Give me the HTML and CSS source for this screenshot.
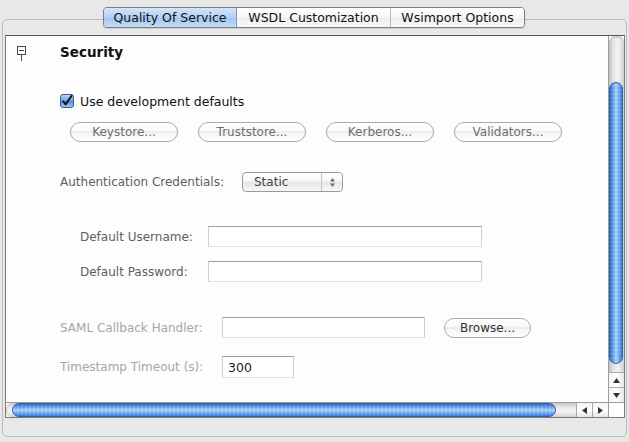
FILE: index.html
```html
<!DOCTYPE html>
<html>
<head>
<meta charset="utf-8">
<link rel="stylesheet" href="styles.css">
</head>
<body>
<div class="tabbar">
  <div class="tab selected">Quality Of Service</div>
  <div class="tab">WSDL Customization</div>
  <div class="tab last">Wsimport Options</div>
</div>
<div class="panel">
  <div class="scrollpane">
    <div class="viewport">
      <div class="row header">
        <div class="tree-toggle"><span class="tree-box"></span><span class="tree-line"></span></div>
        <div class="title">Security</div>
      </div>
      <div class="row checkrow">
        <svg class="checkbox" width="14" height="14" viewBox="0 0 14 14">
          <defs>
            <linearGradient id="cb" x1="0" y1="0" x2="0" y2="1">
              <stop offset="0" stop-color="#bcd8f6"/>
              <stop offset="0.5" stop-color="#6ea7ea"/>
              <stop offset="0.55" stop-color="#4b8de0"/>
              <stop offset="1" stop-color="#a9d0fa"/>
            </linearGradient>
          </defs>
          <rect x="0.5" y="0.5" width="13" height="13" rx="2.5" fill="url(#cb)" stroke="#3d5f8f"/>
          <path d="M3.2 7.2 L5.6 10.4 L11.6 1.8" fill="none" stroke="#111" stroke-width="1.9" stroke-linecap="round" stroke-linejoin="round"/>
        </svg>
        <span class="checklabel">Use development defaults</span>
      </div>
      <div class="row buttons">
        <div class="pill">Keystore...</div>
        <div class="pill">Truststore...</div>
        <div class="pill">Kerberos...</div>
        <div class="pill">Validators...</div>
      </div>
      <div class="row authrow">
        <span class="label w-auth">Authentication Credentials:</span>
        <div class="combo">
          <span class="combo-text">Static</span>
          <span class="combo-arrows">
            <svg width="7" height="11" viewBox="0 0 7 11"><path d="M3.5 1 L6 4.5 L1 4.5 Z" fill="#6a6a6a"/><path d="M3.5 10 L6 6.5 L1 6.5 Z" fill="#6a6a6a"/></svg>
          </span>
        </div>
      </div>
      <div class="row fieldrow indent first-field">
        <span class="label w-user">Default Username:</span>
        <div class="field wide"></div>
      </div>
      <div class="row fieldrow indent second-field">
        <span class="label w-user">Default Password:</span>
        <div class="field wide"></div>
      </div>
      <div class="row fieldrow saml">
        <span class="label disabled w-saml">SAML Callback Handler:</span>
        <div class="field medium"></div>
        <div class="pill browse">Browse...</div>
      </div>
      <div class="row fieldrow timestamp">
        <span class="label disabled w-saml">Timestamp Timeout (s):</span>
        <div class="field small"><span class="field-text">300</span></div>
      </div>
    </div>
    <div class="vscroll">
      <div class="vtrack">
        <div class="vthumb"></div>
      </div>
      <div class="varrow up"><svg width="7" height="5" viewBox="0 0 7 5"><path d="M3.5 0 L7 5 L0 5 Z" fill="#333"/></svg></div>
      <div class="varrow down"><svg width="7" height="5" viewBox="0 0 7 5"><path d="M3.5 5 L7 0 L0 0 Z" fill="#333"/></svg></div>
    </div>
    <div class="hscroll">
      <div class="htrack">
        <div class="hthumb"></div>
      </div>
      <div class="harrow left"><svg width="5" height="7" viewBox="0 0 5 7"><path d="M0 3.5 L5 0 L5 7 Z" fill="#333"/></svg></div>
      <div class="harrow right"><svg width="5" height="7" viewBox="0 0 5 7"><path d="M5 3.5 L0 0 L0 7 Z" fill="#333"/></svg></div>
    </div>
    <div class="corner"></div>
  </div>
</div>
</body>
</html>
```
FILE: styles.css
```css
* { box-sizing: border-box; }
html, body { margin: 0; padding: 0; }
body {
  width: 629px;
  height: 442px;
  overflow: hidden;
  background: #e8e8e8;
  font-family: "DejaVu Sans", "Lucida Grande", sans-serif;
  font-size: 12px;
  color: #111;
}

/* Tabs */
.tabbar {
  position: relative;
  z-index: 1;
  display: flex;
  margin: 7px 0 0 103px;
  height: 21px;
  width: 422px;
  border: 1px solid #7d7d7d;
  border-radius: 4px;
  overflow: hidden;
  box-shadow: 0 1px 1px rgba(0,0,0,0.12);
}
.tab {
  height: 100%;
  display: flex;
  align-items: center;
  justify-content: center;
  font-size: 12.5px;
  color: #111;
  background: linear-gradient(#ffffff, #f6f6f6 50%, #ececec 51%, #fafafa);
  border-right: 1px solid #b9b9b9;
}
.tab:nth-child(1) { width: 133px; }
.tab:nth-child(2) { width: 154px; }
.tab.last { flex: 1; border-right: none; }
.tab.selected {
  background: linear-gradient(#d3e5fa, #b1d0f4 50%, #9fc4f0 51%, #c4def9);
  border-right: 1px solid #7d98bd;
}

/* Panel */
.panel {
  margin: -9px 2px 0 2px;
  height: 418px;
  border: 1px solid #bcbcbc;
  border-radius: 5px;
  padding: 15px 1px 18px 2px;
  background: #e8e8e8;
}
.scrollpane {
  height: 100%;
  border: 1px solid #7a7a7a;
  border-top-color: #555;
  display: grid;
  grid-template-columns: 1fr 16px;
  grid-template-rows: 1fr 15px;
  background: #fdfdfd;
}

/* Viewport content */
.viewport {
  background: #fdfdfd;
  padding: 8px 0 0 54px;
  display: flex;
  flex-direction: column;
  overflow: hidden;
}
.row { display: flex; align-items: center; }
.header { height: 16px; margin-left: -43px; align-items: flex-start; }
.tree-toggle {
  width: 9px;
  display: flex;
  flex-direction: column;
  align-items: center;
  margin-top: 2px;
}
.tree-box {
  width: 9px;
  height: 9px;
  border: 1px solid #4a4a4a;
  background: linear-gradient(#4a4a4a, #4a4a4a) center / 5px 1px no-repeat, #fff;
}
.tree-line { width: 1px; height: 6px; background: #4a4a4a; }
.title {
  margin-left: 34px;
  font-weight: bold;
  font-size: 13.5px;
  line-height: 16px;
  color: #111;
}

.checkrow { height: 14px; margin-top: 34px; }
.checkbox { display: block; flex: none; }
.checklabel { margin-left: 6px; font-size: 12.5px; color: #111; }

.buttons { height: 20px; margin-top: 14px; margin-left: 10px; gap: 20px; }
.pill {
  width: 108px;
  height: 20px;
  border: 1px solid #a9a9a9;
  border-radius: 10px;
  display: flex;
  align-items: center;
  justify-content: center;
  color: #6e6e6e;
  font-size: 12px;
  background: linear-gradient(#ffffff, #f8f8f8 45%, #e4e4e4 50%, #f4f4f4 55%, #ffffff);
}

.authrow { height: 20px; margin-top: 30px; }
.label { color: #5e5e5e; font-size: 12px; white-space: nowrap; }
.label.disabled { color: #a6a6a6; }
.w-auth { width: 182px; }
.w-user { width: 128px; }
.w-saml { width: 162px; }

.combo {
  width: 101px;
  height: 20px;
  border: 1px solid #9a9a9a;
  border-radius: 4px;
  display: flex;
  align-items: center;
  background: linear-gradient(#ffffff, #f7f7f7 45%, #e6e6e6 52%, #f8f8f8);
}
.combo-text { flex: 1; padding-left: 11px; color: #444; font-size: 12px; }
.combo-arrows {
  width: 21px;
  height: 100%;
  border-left: 1px solid #c4c4c4;
  display: flex;
  align-items: center;
  justify-content: center;
}
.combo-arrows svg { display: block; }

.fieldrow { height: 21px; }
.indent { margin-left: 20px; }
.first-field { margin-top: 34px; }
.second-field { margin-top: 14px; }
.saml { margin-top: 35px; }
.timestamp { margin-top: 18px; height: 22px; }

.field {
  height: 100%;
  background: #fff;
  border: 1px solid #cfcfcf;
  border-top-color: #9d9d9d;
  border-bottom-color: #e2e2e2;
  display: flex;
  align-items: center;
}
.field.wide { width: 274px; }
.field.medium { width: 203px; }
.field.small { width: 72px; }
.field-text { padding-left: 5px; font-size: 12.5px; color: #222; }
.pill.browse { width: 87px; margin-left: 19px; color: #333; height: 20px; }

/* Vertical scrollbar */
.vscroll {
  display: flex;
  flex-direction: column;
  border-left: 1px solid #9d9d9d;
  background: #fdfdfd;
}
.vtrack {
  flex: 1;
  padding-top: 44px;
  background: linear-gradient(to right, #bfbfbf, #e6e6e6 30%, #f3f3f3 60%, #cfcfcf);
  border-top: 2px solid #c9c9c9;
  border-radius: 6px 6px 0 0;
}
.vthumb {
  width: 14px;
  margin-left: 0;
  height: 282px;
  border-radius: 7px;
  border: 1px solid #2f5fa8;
  background:
    repeating-linear-gradient(0deg, rgba(255,255,255,0.12) 0 2px, rgba(0,0,0,0.0) 2px 4px),
    linear-gradient(to right, #2c66c8, #5c9ae6 25%, #a7d0fa 50%, #6aa6ee 75%, #3574d6);
}
.varrow {
  height: 15px;
  border-top: 1px solid #a8a8a8;
  display: flex;
  align-items: center;
  justify-content: center;
  background: linear-gradient(to right, #f4f4f4, #ffffff 50%, #e6e6e6);
}
.varrow svg { display: block; }

/* Horizontal scrollbar */
.hscroll {
  display: flex;
  border-top: 1px solid #9d9d9d;
  background: #fdfdfd;
}
.htrack {
  flex: 1;
  padding-left: 5px;
  display: flex;
  align-items: stretch;
  background: linear-gradient(#c4c4c4, #e8e8e8 30%, #f4f4f4 60%, #d0d0d0);
  border-left: 1px solid #c9c9c9;
  border-radius: 6px 0 0 6px;
}
.hthumb {
  width: 544px;
  height: 14px;
  border-radius: 7px;
  border: 1px solid #2f5fa8;
  background:
    repeating-linear-gradient(90deg, rgba(255,255,255,0.12) 0 2px, rgba(0,0,0,0) 2px 4px),
    linear-gradient(#2c66c8, #5c9ae6 25%, #a7d0fa 50%, #6aa6ee 75%, #3574d6);
}
.harrow {
  width: 16px;
  border-left: 1px solid #a8a8a8;
  display: flex;
  align-items: center;
  justify-content: center;
  background: linear-gradient(#f4f4f4, #ffffff 50%, #e6e6e6);
}
.harrow svg { display: block; }
.corner {
  border-top: 1px solid #9d9d9d;
  border-left: 1px solid #9d9d9d;
  background: #fdfdfd;
}
```
